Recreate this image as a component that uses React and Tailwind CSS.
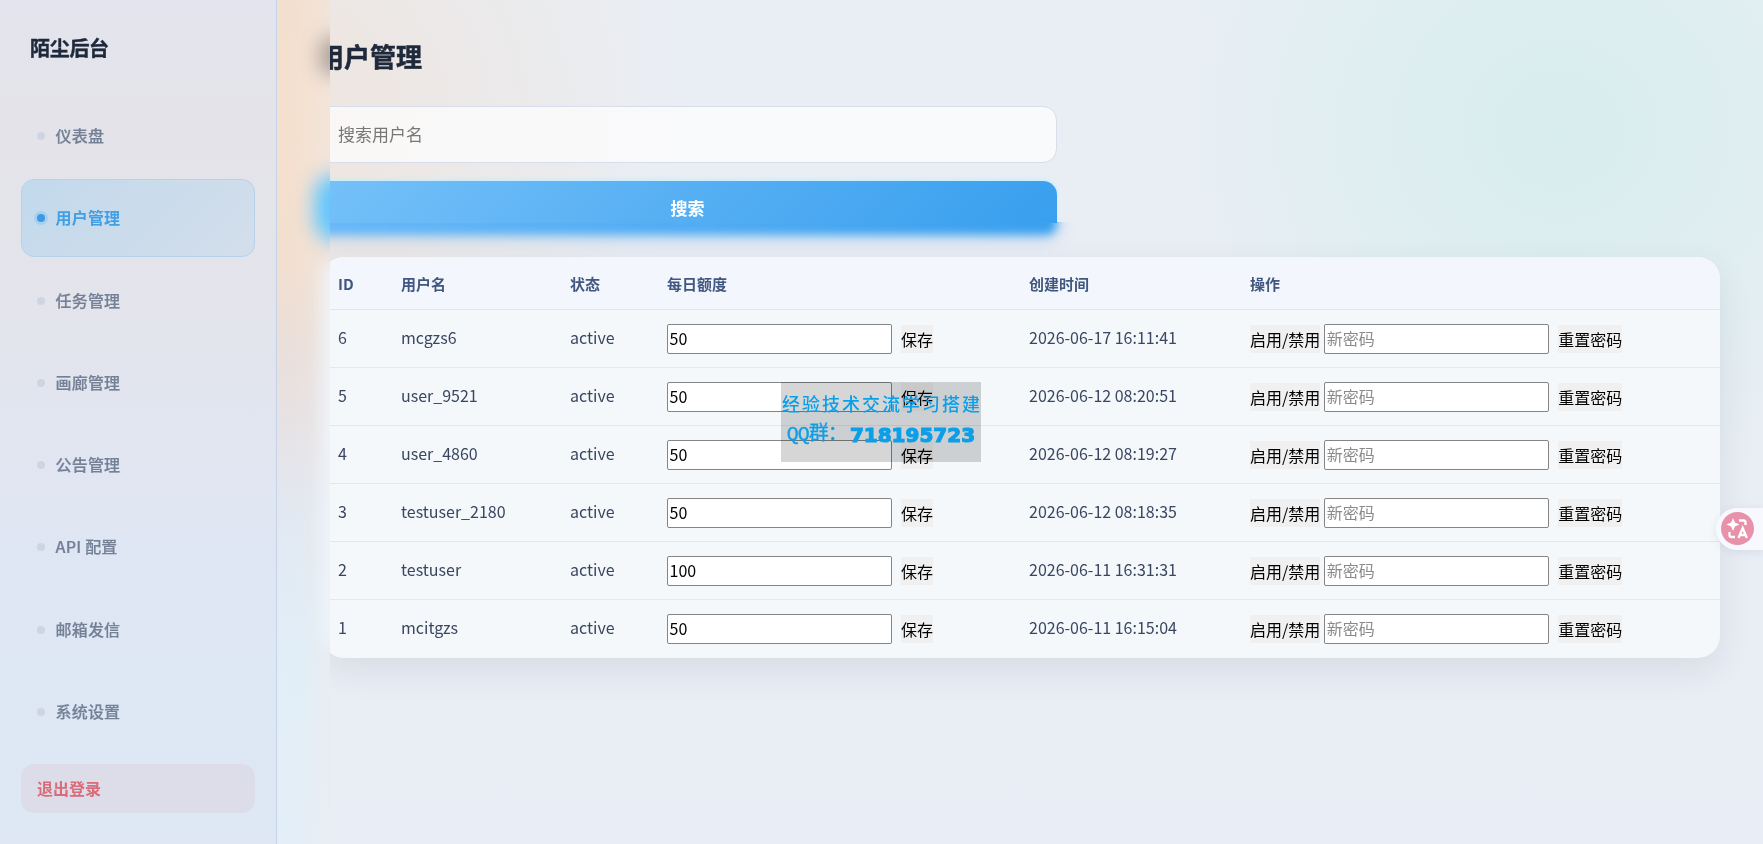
import React from "react";

const NAV = ["仪表盘", "用户管理", "任务管理", "画廊管理", "公告管理", "API 配置", "邮箱发信", "系统设置"];

const USERS = [
  { id: 6, name: "mcgzs6", quota: 50, created: "2026-06-17 16:11:41" },
  { id: 5, name: "user_9521", quota: 50, created: "2026-06-12 08:20:51" },
  { id: 4, name: "user_4860", quota: 50, created: "2026-06-12 08:19:27" },
  { id: 3, name: "testuser_2180", quota: 50, created: "2026-06-12 08:18:35" },
  { id: 2, name: "testuser", quota: 100, created: "2026-06-11 16:31:31" },
  { id: 1, name: "mcitgzs", quota: 50, created: "2026-06-11 16:15:04" },
];

const COLS = "grid grid-cols-[63px_169px_97px_362px_221px_1fr] pl-4";

function Sidebar() {
  return (
    <aside className="flex w-[277px] shrink-0 flex-col border-r border-[#c5d3e8] bg-[linear-gradient(180deg,#e3e4ee_0%,#e4e3e9_14%,#e3e4ec_38%,#e0e6f2_58%,#dfe6f4_70%,#dde8f4_86%,#dfe7f4_100%)] px-[21px]">
      <div className="mt-[32px] pl-[9px] text-[20px] leading-[32px] font-bold tracking-[-0.3px] text-[#1e293b] [-webkit-text-stroke:0.4px_#1e293b]">陌尘后台</div>
      <nav className="mt-[33px] flex flex-col gap-[4.3px]">
        {NAV.map((label, i) => (
          <a
            key={label}
            className={
              i === 1
                ? "flex h-[78px] items-center gap-[11px] rounded-[13px] border border-[#b5d2ea] bg-[linear-gradient(135deg,#c2d9ec,#d3deeb)] pl-[14.5px] text-[16px] font-bold tracking-[0.2px] text-[#419fe4]"
                : "flex h-[78px] items-center gap-[11px] pl-[15.5px] text-[16px] font-medium tracking-[0.2px] text-[#748096] [-webkit-text-stroke:0.2px_#748096]"
            }
          >
            <span
              className={
                i === 1
                  ? "size-2 rounded-full bg-[#3b9ae6] shadow-[0_0_0_3px_#a8cfee]"
                  : "size-2 rounded-full bg-[#ced4e1]"
              }
            />
            <span className="mb-[2px]">{label}</span>
          </a>
        ))}
      </nav>
      <button className="mt-[13px] h-[49px] rounded-[13px] bg-[#dddde9] pb-[1px] pl-[16px] text-left text-[16px] font-bold text-[#da6b7a]">退出登录</button>
    </aside>
  );
}

function ActionButton({ children }) {
  return <button className="mt-[1px] h-[28px] bg-[#f0f0f0] text-[16px] leading-[27px] text-black">{children}</button>;
}

function Row({ user }) {
  return (
    <div className={COLS + " h-[58.1px] border-b border-[#e2e8f0] text-[16px] text-[#3a4660] last:border-b-0"}>
      <div className="pt-[15px]">{user.id}</div>
      <div className="pt-[15px]">{user.name}</div>
      <div className="pt-[15px]">active</div>
      <div className="flex items-start gap-[9px] pt-[14px]">
        <input readOnly value={user.quota} className="h-[30px] w-[225px] rounded-[2px] border border-[#858585] bg-white px-[1.5px] pb-[2px] text-black" />
        <ActionButton>保存</ActionButton>
      </div>
      <div className="pt-[15px]">{user.created}</div>
      <div className="flex items-start gap-[4px] pt-[14px]">
        <ActionButton>启用/禁用</ActionButton>
        <input readOnly placeholder="新密码" className="h-[30px] w-[225px] rounded-[2px] border border-[#858585] bg-white px-[1.5px] pb-[2px] placeholder:text-[#8a8a8a]" />
        <span className="ml-[5px]"><ActionButton>重置密码</ActionButton></span>
      </div>
    </div>
  );
}

function FrostedStrip() {
  return (
    <div className="absolute top-0 left-[277px] h-[844px] w-[53px] overflow-hidden bg-[linear-gradient(180deg,#f3dfcf_0%,#f5e0ce_15%,#f3dfcf_30%,#ebdfd9_40%,#e6e2e4_50%,#e2e9f3_62%,#e1edf7_75%,#e3eef8_100%)]">
      <div className="absolute inset-0 bg-[linear-gradient(90deg,rgba(240,236,234,0)_30%,rgba(240,236,234,0.4)_100%)]" />
      <div className="absolute top-[36px] left-[43px] h-[40px] w-[30px] rounded-full bg-[#8b7d78] opacity-70 blur-[10px]" />
      <div className="absolute top-[175px] left-[38px] h-[66px] w-[50px] rounded-[20px] bg-[#5cc4ff] blur-[10px]" />
      <div className="absolute top-[265px] left-[47px] h-[380px] w-[30px] bg-[#f0f6fd] blur-[9px]" />
    </div>
  );
}

function Watermark() {
  return (
    <>
      <div className="absolute top-[382px] left-[781px] h-[80px] w-[200px] bg-[#d6d6d6] mix-blend-multiply" />
      <div className="absolute top-[382px] left-[781px] flex h-[80px] w-[200px] flex-col items-center text-[#0c9fe8]">
        <div className="mt-[6px] pl-[2px] text-[18px] leading-[30px] font-medium tracking-[2px] whitespace-nowrap">经验技术交流学习搭建</div>
        <div className="flex items-center pt-[2px] text-[20px] leading-[30px] whitespace-nowrap">
          <span className="font-['Liberation_Mono','Noto_Sans_CJK_SC',monospace] tracking-[-1px] [-webkit-text-stroke:0.3px_#0c9fe8]">QQ群：</span>
          <b className="pl-[3px] font-['DejaVu_Sans',sans-serif] text-[20px] font-bold [-webkit-text-stroke:1.2px_#0c9fe8]">718195723</b>
        </div>
      </div>
    </>
  );
}

function TranslateBadge() {
  return (
    <div className="absolute top-[508px] right-0 flex h-[42px] w-[47px] items-center rounded-l-full bg-[#f7f9fe] pl-[5px] pb-[1px] shadow-[0_2px_8px_rgba(80,100,140,0.12)]">
      <svg width="33" height="33" viewBox="0 0 33 33" fill="none">
        <circle cx="16.5" cy="16.5" r="16.5" fill="#e791ab" />
        <path d="M12 6 13.900 10.600 18.500 12.500 13.900 14.400 12 19 10.100 14.400 5.500 12.500 10.100 10.600Z" fill="#fff" />
        <path d="M18 8.500H22.500a2 2 0 0 1 2 2v2.500M8.500 20v3a2 2 0 0 0 2 2h3.500M17.500 26l4.200-10 4.200 10M19 23h5.500" stroke="#fff" strokeWidth="2.300" />
      </svg>
    </div>
  );
}

export default function App() {
  return (
    <div className="relative flex h-[844px] w-[1763px] overflow-hidden bg-[radial-gradient(ellipse_410px_380px_at_1560px_130px,rgba(212,237,236,0.8)_0%,rgba(214,238,238,0.55)_45%,rgba(230,238,245,0)_100%),radial-gradient(ellipse_420px_400px_at_270px_110px,rgba(240,226,216,0.8),rgba(240,230,224,0)_100%),linear-gradient(180deg,#e9eef4,#e9edf5)] font-['Noto_Sans_CJK_SC',sans-serif]">
      <Sidebar />
      <main className="flex w-[1486px] flex-col pr-[43px] pl-[45px]">
        <h1 className="mt-[36px] -ml-[4px] text-[26px] leading-[40px] font-bold text-[#1e293b] [-webkit-text-stroke:0.5px_#1e293b]">用户管理</h1>
        <input placeholder="搜索用户名" className="mt-[30px] -ml-2 h-[57px] w-[743px] rounded-[14px] border border-[#d5deea] bg-white/70 pr-4 pb-[2px] pl-[23px] text-[17px] placeholder:text-[#777]" />
        <div className="relative mt-[18px] -ml-2 h-[42px] w-[743px]">
          <div className="absolute top-[41px] -left-5 h-[35px] w-[783px] overflow-hidden">
            <div className="mt-[-21px] ml-5 h-[34px] w-[743px] rounded-[10px] bg-[linear-gradient(90deg,#68b8f8,#389fee)] shadow-[0_4px_16px_rgba(90,170,230,0.35)] blur-[5px]" />
          </div>
          <button className="relative h-[42px] w-[743px] rounded-t-[14px] bg-[linear-gradient(135deg,#76c1f9_0%,#56aff3_50%,#389fee_100%)] pt-[11px] pl-[4px] text-[17px] font-bold text-white shadow-[0_-2px_3px_rgba(190,240,255,0.7)]">搜索</button>
        </div>
        <section className="relative mt-[34px] h-[401px] rounded-[22px] bg-[#f4f8fb] shadow-[0_12px_32px_rgba(60,80,120,0.11)]">
          <div className={COLS + " h-[53px] items-center rounded-t-[22px] border-b border-[#e0e7f1] bg-[#f3f6fc] pt-[2px] text-[15px] font-bold text-[#415780]"}>
            <div>ID</div>
            <div>用户名</div>
            <div>状态</div>
            <div>每日额度</div>
            <div>创建时间</div>
            <div>操作</div>
          </div>
          {USERS.map((u) => (
            <Row key={u.id} user={u} />
          ))}
        </section>
      </main>
      <FrostedStrip />
      <Watermark />
      <TranslateBadge />
    </div>
  );
}
